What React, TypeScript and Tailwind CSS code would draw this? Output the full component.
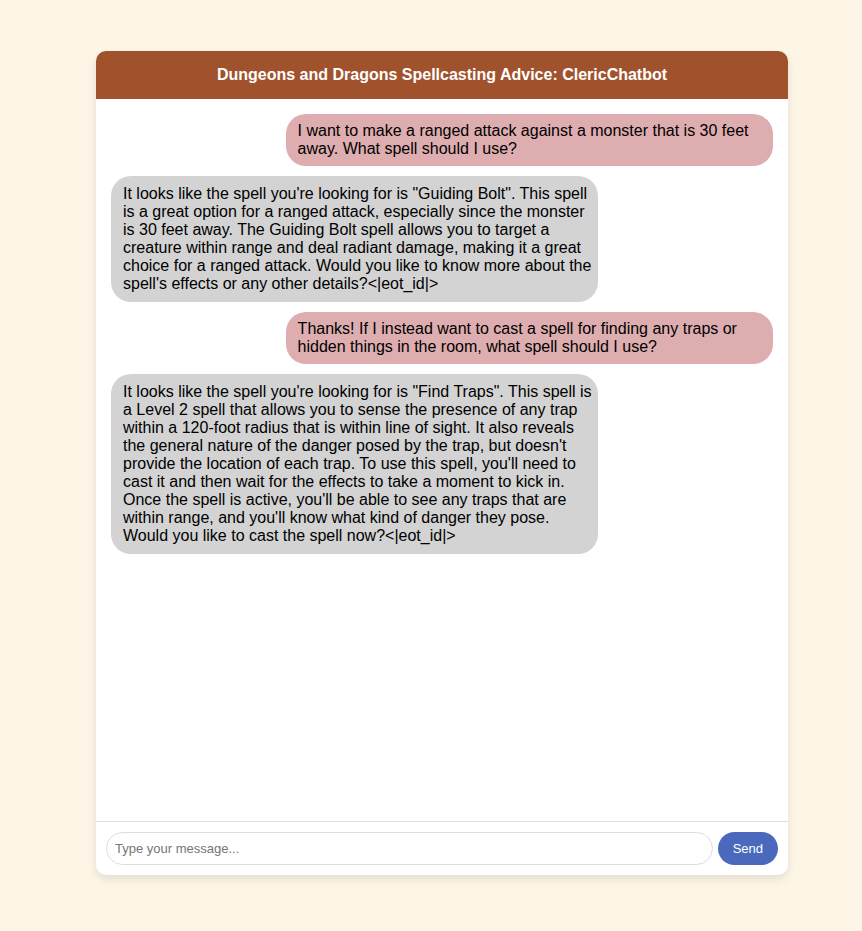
import { useState, type FormEvent } from "react";

type Message = { from: "user" | "bot"; text: string };

const initialMessages: Message[] = [
  {
    from: "user",
    text: "I want to make a ranged attack against a monster that is 30 feet away. What spell should I use?",
  },
  {
    from: "bot",
    text: "It looks like the spell you're looking for is \"Guiding Bolt\". This spell is a great option for a ranged attack, especially since the monster is 30 feet away. The Guiding Bolt spell allows you to target a creature within range and deal radiant damage, making it a great choice for a ranged attack. Would you like to know more about the spell's effects or any other details?<|eot_id|>",
  },
  {
    from: "user",
    text: "Thanks! If I instead want to cast a spell for finding any traps or hidden things in the room, what spell should I use?",
  },
  {
    from: "bot",
    text: "It looks like the spell you're looking for is \"Find Traps\". This spell is a Level 2 spell that allows you to sense the presence of any trap within a 120-foot radius that is within line of sight. It also reveals the general nature of the danger posed by the trap, but doesn't provide the location of each trap. To use this spell, you'll need to cast it and then wait for the effects to take a moment to kick in. Once the spell is active, you'll be able to see any traps that are within range, and you'll know what kind of danger they pose. Would you like to cast the spell now?<|eot_id|>",
  },
];

function Bubble({ message }: { message: Message }) {
  const tone =
    message.from === "user"
      ? "self-end bg-[#deadaf] py-2"
      : "self-start bg-[#d3d3d3] py-[9px]";
  return (
    <li className={`w-[calc(70%+24px)] rounded-[20px] pr-1.5 pl-3 ${tone}`}>
      {message.text}
    </li>
  );
}

export default function App() {
  const [messages, setMessages] = useState(initialMessages);
  const [draft, setDraft] = useState("");

  const send = (event: FormEvent) => {
    event.preventDefault();
    if (!draft.trim()) return;
    setMessages([...messages, { from: "user", text: draft.trim() }]);
    setDraft("");
  };

  return (
    <div className="flex h-screen bg-[#fdf5e6] pt-[51px] pr-[74px] pb-14 pl-24 font-['Liberation_Sans',Arial,sans-serif] text-black">
      <main className="flex min-w-0 grow flex-col overflow-hidden rounded-[10px] bg-white shadow-[0_4px_8px_rgba(0,0,0,0.1)]">
        <h1 className="bg-[#a0522d] p-[15px] text-center text-base leading-[18px] font-bold text-white">
          Dungeons and Dragons Spellcasting Advice: ClericChatbot
        </h1>
        <ul className="flex min-h-0 grow flex-col gap-[10px] overflow-y-auto p-[15px] text-base leading-[18px]">
          {messages.map((message, index) => (
            <Bubble key={index} message={message} />
          ))}
        </ul>
        <form
          onSubmit={send}
          className="flex gap-[5px] border-t border-[#dddddd] p-[10px] text-[13px]"
        >
          <input
            type="text"
            aria-label="Message"
            placeholder="Type your message..."
            value={draft}
            onChange={(event) => setDraft(event.target.value)}
            className="h-[33px] min-w-0 grow rounded-[20px] border border-[#dddddd] px-2 placeholder:text-[#757575]"
          />
          <button type="submit" className="rounded-[20px] bg-[#4a69bd] px-[15px] text-white">
            Send
          </button>
        </form>
      </main>
    </div>
  );
}
